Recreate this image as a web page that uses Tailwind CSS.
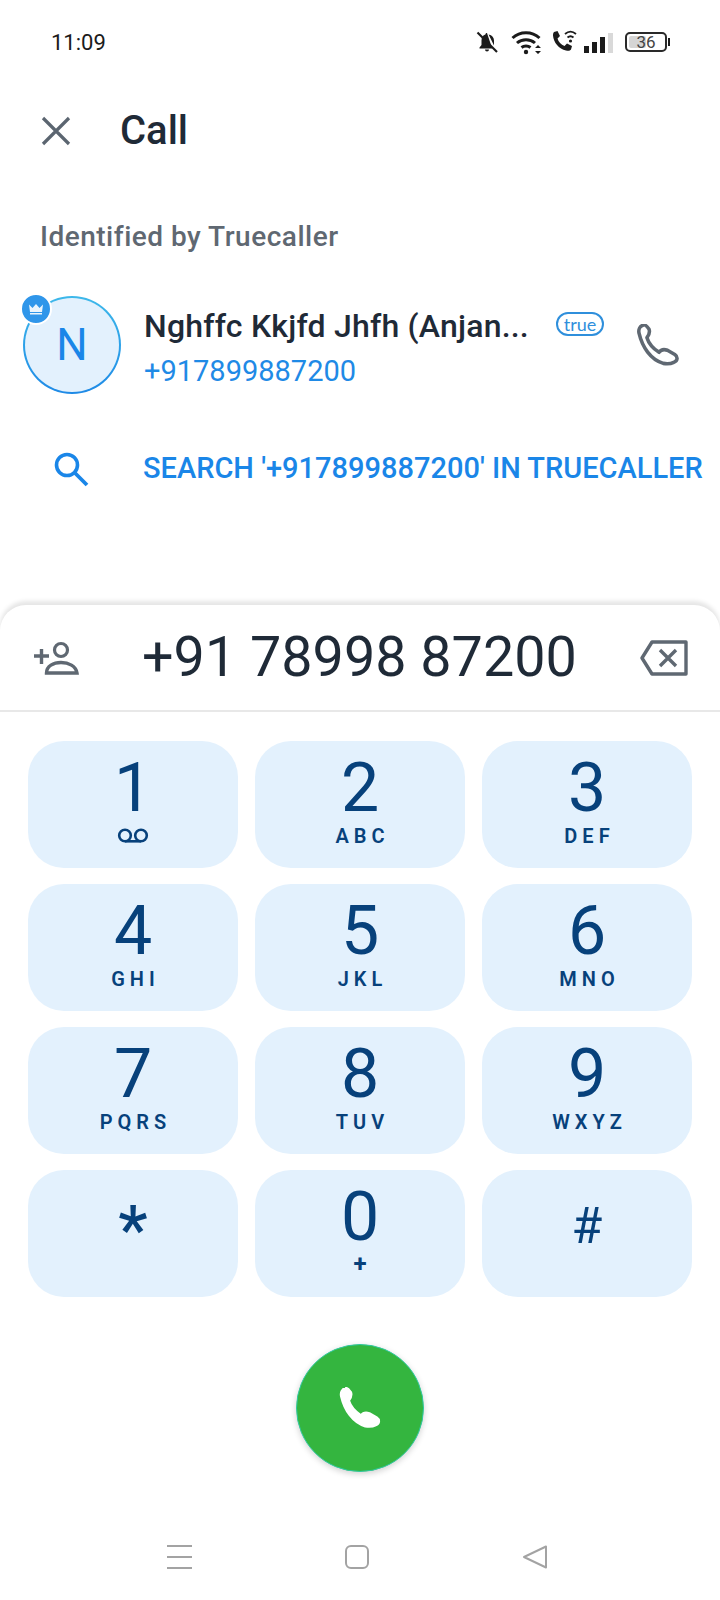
<!DOCTYPE html>
<html lang="en">
<head>
    <meta charset="UTF-8">
    <meta name="viewport" content="width=device-width, initial-scale=1.0">
    <title>Call</title>
    <script src="https://cdn.jsdelivr.net/npm/@tailwindcss/browser@4"></script>
</head>
<body class="bg-white font-[Roboto,sans-serif]">
    <div class="w-[720px] h-[1600px] overflow-hidden flex flex-col bg-white">
        <!-- status bar -->
        <div class="h-[84px] flex items-center pl-[51px] pr-[50px] text-[#1b1b1b]">
            <span class="text-[22px]">11:09</span>
            <div class="ml-auto flex items-center">
                <svg class="w-[24px] h-[24px]" viewBox="0 0 24 24" fill="#1b1b1b"><path d="M12 3c-1 0-1.600.7-1.600 1.500C7.800 5.300 6.500 7.500 6.500 10.500V15l-2 2.500v1h12.700zM19 15.500v-5c0-3-1.700-5.300-5.400-6zM10 19.500h4a2 2 0 0 1-4 0z"/><path d="M2.500 2.500 22 22" stroke="#1b1b1b" stroke-width="2.200" fill="none"/></svg>
                <svg class="w-[32px] h-[26px] ml-[12px]" viewBox="0 0 32 26" fill="none"><path d="M1.500 9C9 2 21 2 28.500 9M6 14c5-4.500 13-4.500 18 0M10.500 18.500c2.500-2 6.500-2 9 0" stroke="#1b1b1b" stroke-width="3"/><circle cx="15" cy="23" r="2.200" fill="#1b1b1b"/><path d="M27 16l-3 3h6zM27 25l-3-3h6z" fill="#1b1b1b"/></svg>
                <svg class="w-[28px] h-[26px] ml-[8px]" viewBox="0 0 28 26" fill="none"><path d="M3 3 6.500 2 9 7 6.500 9.500c1 3.500 3.500 6 7 7.500l2.500-2.500 5 2.500-1 3.500c-1 1.500-3 1.500-5 1C8 20 2.500 13.500 2 6.500c0-1.500.2-2.700 1-3.500z" fill="#1b1b1b"/><path d="M14 5c3.500-3 7.500-3 11 0M16.500 8.500c2-1.700 4-1.700 6 0" stroke="#1b1b1b" stroke-width="1.800"/><circle cx="19.500" cy="12" r="1.600" fill="#1b1b1b"/></svg>
                <div class="flex items-end gap-[3px] ml-[5px] h-[22px] w-[29px]">
                    <div class="w-[5px] h-[7px] bg-[#1b1b1b]"></div>
                    <div class="w-[5px] h-[11px] bg-[#1b1b1b]"></div>
                    <div class="w-[5px] h-[16px] bg-[#1b1b1b]"></div>
                    <div class="w-[5px] h-[20px] bg-[#d9d9d9]"></div>
                </div>
                <div class="relative w-[42px] h-[20px] ml-[12px] rounded-[5px] border-2 border-[#2a2a2a] flex items-center justify-center">
                    <div class="absolute left-[2px] top-[2px] bottom-[2px] w-[17px] bg-[#d5d5d5] rounded-[2px]"></div>
                    <span class="relative text-[17px] leading-none text-[#444]">36</span>
                </div>
                <div class="w-[2px] h-[8px] bg-[#1b1b1b] ml-[1px]"></div>
            </div>
        </div>

        <!-- header -->
        <div class="h-[94px] flex items-center">
            <svg class="w-[30px] h-[30px] ml-[41px]" viewBox="0 0 30 30" fill="none"><path d="M2 2 28 28M28 2 2 28" stroke="#5b6570" stroke-width="3.200"/></svg>
            <h1 class="ml-[49px] text-[40px] font-medium text-[#1f2a37] leading-none">Call</h1>
        </div>

        <p class="mt-[40px] pl-[40px] h-[38px] leading-[38px] text-[28px] tracking-[0.5px] font-medium text-[#5f6872]">Identified by Truecaller</p>

        <!-- contact -->
        <div class="relative mt-[37px] h-[104px] pl-[23px] flex items-center">
            <div class="relative shrink-0 w-[98px] h-[98px] rounded-full bg-gradient-to-b from-[#3db8ea] to-[#1f8ae6] p-[2px]">
                <div class="w-full h-full rounded-full bg-[#e3f1fd] flex items-center justify-center text-[44px] text-[#1a86e8]">N</div>
                <div class="absolute left-[-3px] top-[-3px] w-[32px] h-[32px] rounded-full bg-[#2f96ea] border-2 border-white flex items-center justify-center">
                    <svg class="w-[16px] h-[12px]" viewBox="0 0 16 12" fill="#fff" fill-opacity="0.9"><path d="M1 1.500 4.500 5 8 1l3.500 4L15 1.500 14 9H2z"/><path d="M2 10h12v1.500H2z"/></svg>
                </div>
            </div>
            <div class="ml-[23px] mt-[4px] w-[390px]">
                <div class="flex items-center">
                    <span class="text-[32px] tracking-[0.2px] font-medium text-[#1f2a37] leading-[40px] whitespace-nowrap">Nghffc Kkjfd Jhfh (Anjan...</span>
                </div>
                <p class="text-[29px] text-[#1f8ae6] leading-[36px] mt-[7px]">+917899887200</p>
            </div>
            <div class="absolute left-[556px] top-[19px] w-[48px] h-[24px] rounded-full border-2 border-[#2f8fdc] flex items-center justify-center font-[Lato,sans-serif] text-[18px] leading-none text-[#2f8fdc]">true</div>
            <svg class="absolute left-[637px] top-[31px] w-[42px] h-[42px]" viewBox="0 0 40 40" fill="none"><path d="M2 9C1 5 3 2 6 1C8 0 10 3 11.500 5C12.500 8 11 11 9.500 13C11 18 15 23 21 27C23 24 26 24 29 25L36 29C39 31 39 35 35 36.500C32 38 28 38 25 37.500C13 34 5 22 2 9z" stroke="#5f6872" stroke-width="3.400" stroke-linejoin="round"/></svg>
        </div>

        <!-- search -->
        <div class="mt-[47px] h-[50px] flex items-center">
            <svg class="w-[36px] h-[36px] ml-[53px]" viewBox="0 0 36 36" fill="none"><circle cx="14" cy="14" r="10.500" stroke="#1a86e8" stroke-width="3.600"/><path d="M21.500 21.500 34 34" stroke="#1a86e8" stroke-width="3.800"/></svg>
            <span class="ml-[54px] text-[29px] font-medium text-[#1a86e8] whitespace-nowrap">SEARCH '+917899887200' IN TRUECALLER</span>
        </div>

        <!-- dial pad sheet -->
        <div class="mt-[111px] flex-1 rounded-t-[26px] bg-white shadow-[0_-4px_4px_rgba(0,0,0,0.1)]">
            <div class="h-[107px] border-b-2 border-[#e8e8e8] flex items-center">
                <svg class="w-[46px] h-[34px] ml-[33px] shrink-0" viewBox="0 0 46 34" fill="none"><path d="M1 15h15M8.500 8v15" stroke="#5f6872" stroke-width="3.400"/><circle cx="28" cy="9" r="6.500" stroke="#5f6872" stroke-width="3.200"/><path d="M13.500 32c0-7 7-10.500 14.500-10.500S43 25 44 32z" stroke="#5f6872" stroke-width="3.400"/></svg>
                <span class="ml-[63px] text-[55.700px] text-[#1f2a37] leading-none whitespace-nowrap">+91 78998 87200</span>
                <svg class="w-[48px] h-[36px] ml-auto mr-[32px]" viewBox="0 0 48 36" fill="none"><path d="M12 2H46V34H12L2 18z" stroke="#5f6872" stroke-width="3.400" stroke-linejoin="round"/><path d="M20 10 36 26M36 10 20 26" stroke="#5f6872" stroke-width="3.400"/></svg>
            </div>

            <div class="grid grid-cols-3 gap-x-[17px] gap-y-[16px] px-[28px] pt-[29px] text-[#07417b]">
                <div class="h-[127px] rounded-[36px] bg-[#e3f1fd] flex flex-col items-center pt-[23px]">
                    <span class="text-[68px] h-[49px] leading-[49px]">1</span>
                    <svg class="mt-[15px] w-[32px] h-[15px]" viewBox="0 0 32 15" fill="none"><circle cx="8" cy="7.500" r="5.800" stroke="#07417b" stroke-width="2.600"/><circle cx="24" cy="7.500" r="5.800" stroke="#07417b" stroke-width="2.600"/><path d="M8 13.300h16" stroke="#07417b" stroke-width="2.600"/></svg>
                </div>
                <div class="h-[127px] rounded-[36px] bg-[#e3f1fd] flex flex-col items-center pt-[23px]">
                    <span class="text-[68px] h-[49px] leading-[49px]">2</span>
                    <span class="mt-[16px] text-[20px] h-[14px] leading-[14px] font-semibold tracking-[5px] pl-[5px]">ABC</span>
                </div>
                <div class="h-[127px] rounded-[36px] bg-[#e3f1fd] flex flex-col items-center pt-[23px]">
                    <span class="text-[68px] h-[49px] leading-[49px]">3</span>
                    <span class="mt-[16px] text-[20px] h-[14px] leading-[14px] font-semibold tracking-[5px] pl-[5px]">DEF</span>
                </div>
                <div class="h-[127px] rounded-[36px] bg-[#e3f1fd] flex flex-col items-center pt-[23px]">
                    <span class="text-[68px] h-[49px] leading-[49px]">4</span>
                    <span class="mt-[16px] text-[20px] h-[14px] leading-[14px] font-semibold tracking-[5px] pl-[5px]">GHI</span>
                </div>
                <div class="h-[127px] rounded-[36px] bg-[#e3f1fd] flex flex-col items-center pt-[23px]">
                    <span class="text-[68px] h-[49px] leading-[49px]">5</span>
                    <span class="mt-[16px] text-[20px] h-[14px] leading-[14px] font-semibold tracking-[5px] pl-[5px]">JKL</span>
                </div>
                <div class="h-[127px] rounded-[36px] bg-[#e3f1fd] flex flex-col items-center pt-[23px]">
                    <span class="text-[68px] h-[49px] leading-[49px]">6</span>
                    <span class="mt-[16px] text-[20px] h-[14px] leading-[14px] font-semibold tracking-[5px] pl-[5px]">MNO</span>
                </div>
                <div class="h-[127px] rounded-[36px] bg-[#e3f1fd] flex flex-col items-center pt-[23px]">
                    <span class="text-[68px] h-[49px] leading-[49px]">7</span>
                    <span class="mt-[16px] text-[20px] h-[14px] leading-[14px] font-semibold tracking-[5px] pl-[5px]">PQRS</span>
                </div>
                <div class="h-[127px] rounded-[36px] bg-[#e3f1fd] flex flex-col items-center pt-[23px]">
                    <span class="text-[68px] h-[49px] leading-[49px]">8</span>
                    <span class="mt-[16px] text-[20px] h-[14px] leading-[14px] font-semibold tracking-[5px] pl-[5px]">TUV</span>
                </div>
                <div class="h-[127px] rounded-[36px] bg-[#e3f1fd] flex flex-col items-center pt-[23px]">
                    <span class="text-[68px] h-[49px] leading-[49px]">9</span>
                    <span class="mt-[16px] text-[20px] h-[14px] leading-[14px] font-semibold tracking-[5px] pl-[5px]">WXYZ</span>
                </div>
                <div class="h-[127px] rounded-[36px] bg-[#e3f1fd] flex items-start justify-center pt-[30px]">
                    <span class="text-[66px] h-[50px] leading-[62px] font-medium">*</span>
                </div>
                <div class="h-[127px] rounded-[36px] bg-[#e3f1fd] flex flex-col items-center pt-[23px]">
                    <span class="text-[68px] h-[49px] leading-[49px]">0</span>
                    <span class="mt-[14px] text-[24px] h-[16px] leading-[16px] font-bold">+</span>
                </div>
                <div class="h-[127px] rounded-[36px] bg-[#e3f1fd] flex items-start justify-center pt-[37px]">
                    <span class="text-[50px] h-[38px] leading-[38px]">#</span>
                </div>
            </div>

            <div class="flex justify-center mt-[47px]">
                <div class="w-[128px] h-[128px] rounded-full bg-[#34b53f] border border-[#2fc9a0] shadow-[0_2px_6px_rgba(0,0,0,0.18)] flex items-center justify-center">
                    <svg class="w-[42px] h-[42px]" viewBox="0 0 40 40" fill="#fff" stroke="#fff" stroke-width="2" stroke-linejoin="round"><path d="M2 9C1 5 3 2 6 1C8 0 10 3 11.500 5C12.500 8 11 11 9.500 13C11 18 15 23 21 27C23 24 26 24 29 25L36 29C39 31 39 35 35 36.500C32 38 28 38 25 37.500C13 34 5 22 2 9z"/></svg>
                </div>
            </div>

            <!-- nav bar -->
            <div class="mt-[73px] h-[24px] relative">
                <div class="absolute left-[167px] top-0 w-[25px] h-[24px] flex flex-col justify-between">
                    <div class="h-[2px] bg-[#a3a3a3]"></div>
                    <div class="h-[2px] bg-[#a3a3a3]"></div>
                    <div class="h-[2px] bg-[#a3a3a3]"></div>
                </div>
                <div class="absolute left-[345px] top-0 w-[24px] h-[24px] rounded-[6px] border-2 border-[#a3a3a3]"></div>
                <svg class="absolute left-[522px] top-0 w-[26px] h-[24px]" viewBox="0 0 26 24" fill="none"><path d="M24 1.500V22.500L2 12z" stroke="#a3a3a3" stroke-width="2" stroke-linejoin="round"/></svg>
            </div>
        </div>
    </div>
</body>
</html>
